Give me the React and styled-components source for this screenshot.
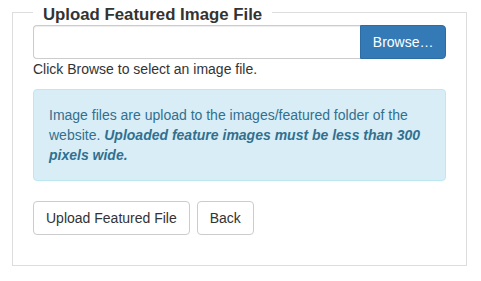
import React from "react";
import styled, { createGlobalStyle } from "styled-components";

function App() {
  return (
    <>
      <GlobalStyle />
      <Page>
        <Fieldset>
          <Legend>Upload Featured Image File</Legend>
          <InputGroup>
            <FileInput type='text' readOnly />
            <BrowseButton type='button'>Browse…</BrowseButton>
          </InputGroup>
          <HelpText>Click Browse to select an image file.</HelpText>
          <Alert>
            Image files are upload to the images/featured folder of the
            website.{" "}
            <strong>
              <em>Uploaded feature images must be less than 300 pixels wide.</em>
            </strong>
          </Alert>
          <ButtonRow>
            <Button type='button'>Upload Featured File</Button>
            <Button type='button'>Back</Button>
          </ButtonRow>
        </Fieldset>
      </Page>
    </>
  );
}

/* Styles */
const GlobalStyle = createGlobalStyle`
  * {
    box-sizing: border-box;
  }
  body {
    margin: 0;
    background: #fff;
    color: #333;
    font-family: "Liberation Sans", Arial, sans-serif;
    font-size: 14px;
    line-height: 20px;
  }
`;

const Page = styled.main`
  padding: 0 0 0 12px;
`;

const Fieldset = styled.fieldset`
  width: 455px;
  margin: 0;
  padding: 0 20px 30px;
  border: 1px solid #ddd;
`;

const Legend = styled.legend`
  padding: 5px 10px 0;
  font-size: 16.8px;
  font-weight: bold;
  line-height: 20px;
  color: #333;
`;

const InputGroup = styled.div`
  display: flex;
  height: 34px;
`;

const FileInput = styled.input`
  flex: 1;
  min-width: 0;
  height: 34px;
  padding: 6px 12px;
  border: 1px solid #ccc;
  border-right: none;
  border-radius: 4px 0 0 4px;
  box-shadow: inset 0 1px 1px rgba(0, 0, 0, 0.075);
  font: inherit;
  outline: none;
`;

const Button = styled.button`
  display: inline-block;
  height: 34px;
  padding: 6px 12px;
  border: 1px solid #ccc;
  border-radius: 4px;
  background: #fff;
  color: #333;
  font: inherit;
  line-height: 20px;
  white-space: nowrap;
  cursor: pointer;
`;

const BrowseButton = styled(Button)`
  padding: 6px 11.5px;
  background: #337ab7;
  border-color: #2e6da4;
  color: #fff;
  border-radius: 0 4px 4px 0;
`;

const HelpText = styled.p`
  margin: 0 0 10px;
  color: #333;
`;

const Alert = styled.div`
  margin-bottom: 20px;
  padding: 15px;
  border: 1px solid #bce8f1;
  border-radius: 4px;
  background: #d9edf7;
  color: #31708f;
`;

const ButtonRow = styled.div`
  display: flex;
  gap: 7px;
`;

export default App;
